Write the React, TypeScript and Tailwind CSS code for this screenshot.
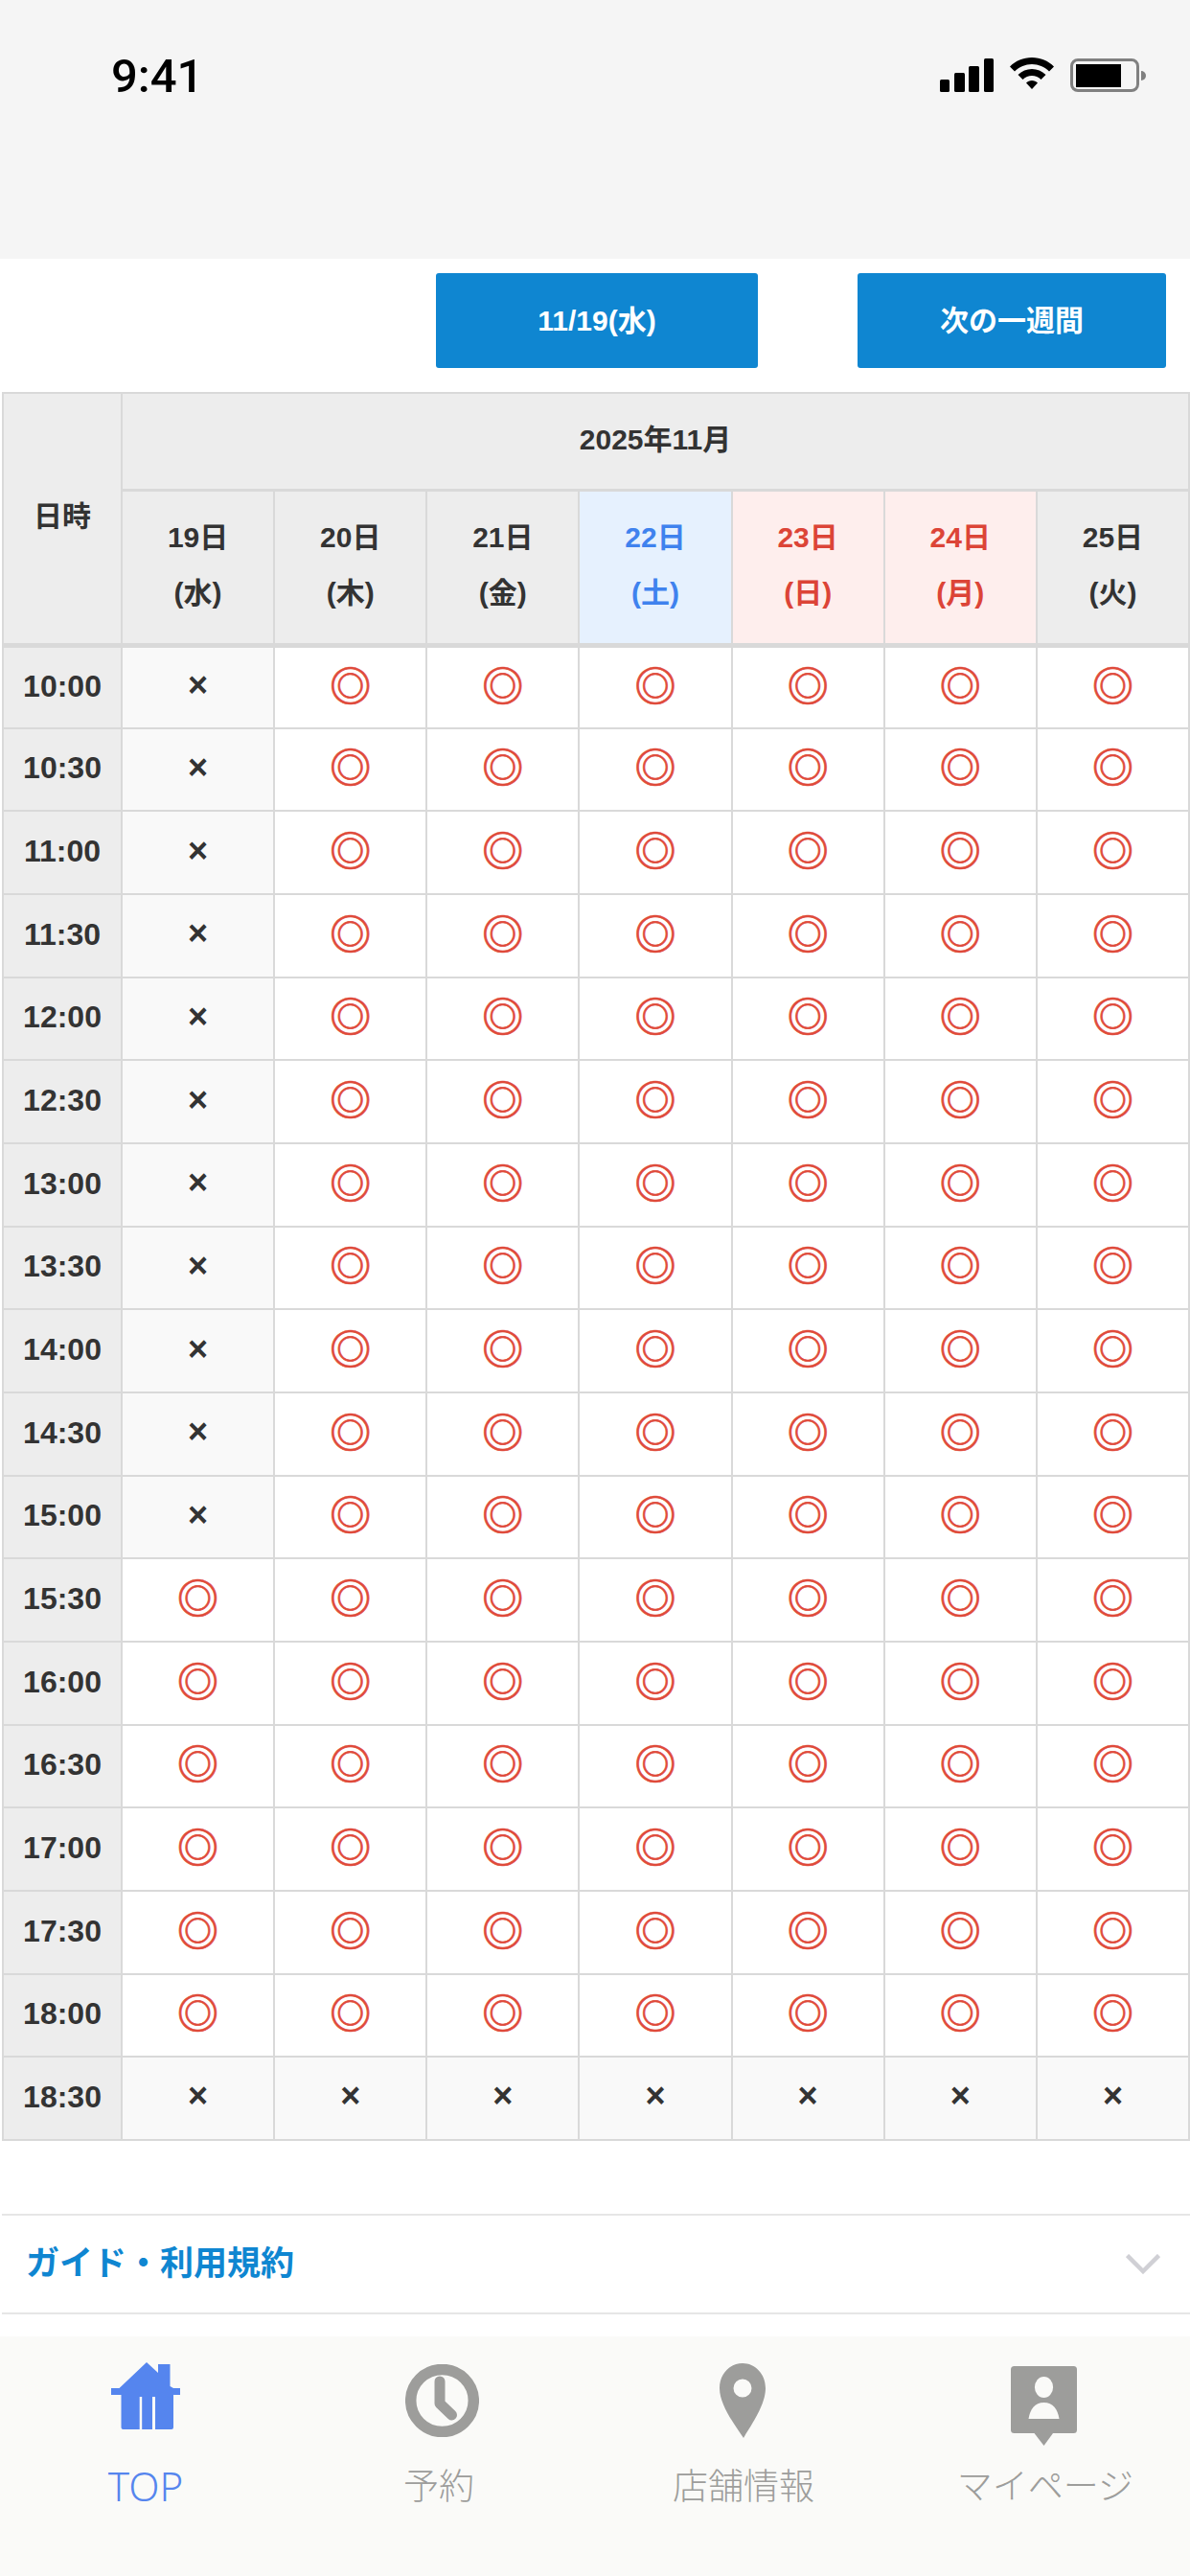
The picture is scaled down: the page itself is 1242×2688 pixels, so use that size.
const times = ["10:00","10:30","11:00","11:30","12:00","12:30","13:00","13:30","14:00","14:30","15:00","15:30","16:00","16:30","17:00","17:30","18:00","18:30"];

const days = [
  { d: "19日", w: "(水)", bg: "bg-[#ededed]", text: "text-[#333333]" },
  { d: "20日", w: "(木)", bg: "bg-[#ededed]", text: "text-[#333333]" },
  { d: "21日", w: "(金)", bg: "bg-[#ededed]", text: "text-[#333333]" },
  { d: "22日", w: "(土)", bg: "bg-[#e6f1fe]", text: "text-[#3f82ee]" },
  { d: "23日", w: "(日)", bg: "bg-[#feeeed]", text: "text-[#dc4437]" },
  { d: "24日", w: "(月)", bg: "bg-[#feeeed]", text: "text-[#dc4437]" },
  { d: "25日", w: "(火)", bg: "bg-[#ededed]", text: "text-[#333333]" },
];

function isOpen(row: number, col: number) {
  if (row === 17) return false;
  if (col === 0) return row >= 11;
  return true;
}

function StatusIcons() {
  return (
    <div className="flex items-end gap-[17px]">
      <svg width="56" height="35" viewBox="0 0 56 35" fill="#000">
        <rect x="0" y="22" width="10" height="13" rx="1.5" />
        <rect x="15" y="15" width="11" height="20" rx="1.5" />
        <rect x="30" y="8" width="11" height="27" rx="1.5" />
        <rect x="46" y="0" width="10" height="35" rx="1.5" />
      </svg>
      <svg width="46" height="33" viewBox="0 0 46 33" fill="#000" className="mb-[3px]">
        <path d="M23 0C14 0 6 3.500 0 9.500L5 14.500C10 9.800 16 7 23 7S36 9.800 41 14.500L46 9.500C40 3.500 32 0 23 0Z" />
        <path d="M23 12C17.500 12 12.500 14.200 8.500 18L13.500 23C16 20.500 19.500 19 23 19S30 20.500 32.500 23L37.500 18C33.500 14.200 28.500 12 23 12Z" />
        <path d="M23 24C20.700 24 18.500 25 17 26.500L23 33L29 26.500C27.500 25 25.300 24 23 24Z" />
      </svg>
      <div className="flex items-center gap-[2px]">
        <div className="flex h-[35px] w-[72px] items-center rounded-[8px] border-[3px] border-[#808080] pl-[3px]">
          <div className="h-[24px] w-[47px] bg-black" />
        </div>
        <div className="h-[10px] w-[5px] rounded-r-full bg-[#808080]" />
      </div>
    </div>
  );
}

function HomeIcon() {
  return (
    <svg width="72" height="70" viewBox="0 0 72 70" className="mt-[1px]">
      <path fill="#5585ee" d="M37 0L49 11V2H61.500V25L65 27H72V34H65V68Q65 70 63 70H12.500Q10.500 70 10.500 68V34H0V27H8.500Z" />
      <rect x="29.700" y="36" width="2.500" height="34" fill="#fafaf8" />
      <rect x="43" y="36" width="3" height="34" fill="#fafaf8" />
    </svg>
  );
}

function ClockIcon() {
  return (
    <svg width="77" height="76" viewBox="0 0 77 76" fill="none" stroke="#9d9d9b" className="mt-[3px] ml-[7px]">
      <ellipse cx="38.500" cy="38" rx="32.800" ry="32.500" strokeWidth="11.500" />
      <path d="M36 18V41L48.500 53" strokeWidth="11" strokeLinecap="round" strokeLinejoin="round" />
    </svg>
  );
}

function PinIcon() {
  return (
    <svg width="48" height="78" viewBox="0 0 48 78" className="mt-[2px] -ml-[3px]">
      <path
        fill="#9d9d9b"
        fillRule="evenodd"
        d="M24 0C37 0 48 11 48 26C48 44 32 66 25 78C17 66 0 44 0 26C0 11 11 0 24 0ZM24 16.500A9.500 9.500 0 1 0 24 35.500A9.500 9.500 0 1 0 24 16.500Z"
      />
    </svg>
  );
}

function UserIcon() {
  return (
    <svg width="69" height="83" viewBox="0 0 69 83" className="mt-[5px] -ml-[3px]">
      <rect width="69" height="70" rx="3.500" fill="#9d9d9b" />
      <path d="M24.500 70H44L34.500 83Z" fill="#9d9d9b" />
      <ellipse cx="34.500" cy="22" rx="9.600" ry="11" fill="#fafaf8" />
      <path d="M18.500 55C20 45 25 38 34.500 38S49 45 50.500 55Z" fill="#fafaf8" />
    </svg>
  );
}

const tabs = [
  { label: "TOP", icon: <HomeIcon />, color: "text-[#5585ee] text-[42px]" },
  { label: "予約", icon: <ClockIcon />, color: "text-[#9d9d9b] text-[37px]" },
  { label: "店舗情報", icon: <PinIcon />, color: "text-[#9d9d9b] text-[37px]" },
  { label: "マイページ", icon: <UserIcon />, color: "text-[#9d9d9b] text-[37px]" },
];

export default function App() {
  return (
    <div className="flex h-[2688px] w-[1242px] flex-col overflow-hidden bg-white font-['Liberation_Sans','Noto_Sans_CJK_JP',sans-serif]">
      <div className="flex h-[270px] items-start justify-between bg-[#f5f5f5] pt-[60px] pr-[46px] pl-[116px]">
        <span className="font-['Roboto',sans-serif] text-[49px] leading-[40px] font-medium text-black">9:41</span>
        <StatusIcons />
      </div>

      <div className="mt-[15px] flex justify-end gap-[104px] pr-[25px]">
        <button className="h-[99px] w-[336px] rounded-[3px] bg-[#0f86d1] text-[30px] font-bold text-white">11/19(水)</button>
        <button className="h-[99px] w-[322px] rounded-[3px] bg-[#0f86d1] text-[30px] font-bold text-white">次の一週間</button>
      </div>

      <table className="mt-[25px] ml-[2px] w-[1240px] table-fixed border-collapse text-[#333333]">
        <colgroup>
          <col className="w-[124px]" />
        </colgroup>
        <thead>
          <tr className="h-[101px]">
            <th rowSpan={2} className="border-2 border-b-[5px] border-[#d9d9d9] bg-[#ededed] pb-[5px] text-[30px] font-bold">日時</th>
            <th colSpan={7} className="border-2 border-b-[3px] border-[#d9d9d9] bg-[#ededed] pb-[3px] text-[30px] font-bold">2025年11月</th>
          </tr>
          <tr className="h-[162px]">
            {days.map((day) => (
              <th key={day.d} className={`border-2 border-b-[5px] border-[#d9d9d9] pb-[4px] text-[30px] leading-[58px] font-bold ${day.bg} ${day.text}`}>
                <div>{day.d}</div>
                <div>{day.w}</div>
              </th>
            ))}
          </tr>
        </thead>
        <tbody>
          {times.map((time, row) => (
            <tr key={time} className="h-[86.67px]">
              <th className="border-2 border-[#d9d9d9] bg-[#ededed] pb-[3px] text-[32px] font-bold">{time}</th>
              {days.map((day, col) => (
                <td key={day.d} className={`border-2 border-[#d9d9d9] p-0 text-center ${isOpen(row, col) ? "bg-white" : "bg-[#f9f9f9] pb-[3px]"}`}>
                  {isOpen(row, col) ? (
                    <span className="text-[43px] leading-none font-bold text-[#df4a3a] [-webkit-text-stroke:0.7px_#df4a3a]">◎</span>
                  ) : (
                    <span className="text-[36px] leading-none font-bold">×</span>
                  )}
                </td>
              ))}
            </tr>
          ))}
        </tbody>
      </table>

      <div className="mt-[76px] ml-[2px] flex h-[105px] items-center justify-between border-y-2 border-[#e6e6e6] pr-[31px] pl-[25px]">
        <span className="text-[35px] font-bold text-[#0f86d1]">ガイド・利用規約</span>
        <svg width="36" height="21" viewBox="0 0 36 21" fill="none" stroke="#d0d0d5" strokeWidth="4.500">
          <path d="M1.500 1.500L18 18L34.500 1.500" />
        </svg>
      </div>

      <nav className="mt-[23px] grid flex-1 grid-cols-[304px_308px_328px_302px] bg-[#fafaf8] pt-[26px]">
        {tabs.map((tab) => (
          <div key={tab.label} className="flex flex-col items-center">
            <div className="flex h-[90px] items-start">{tab.icon}</div>
            <span className={`mt-[15px] font-['Noto_Sans','Noto_Sans_CJK_JP',sans-serif] leading-[50px] font-light ${tab.color}`}>{tab.label}</span>
          </div>
        ))}
      </nav>
    </div>
  );
}
